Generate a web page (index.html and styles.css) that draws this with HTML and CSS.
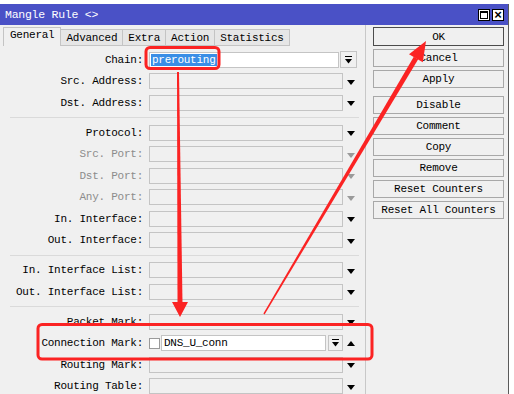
FILE: index.html
```html
<!DOCTYPE html>
<html lang="en">
  <head>
    <meta charset="UTF-8" />
    <meta name="viewport" content="width=device-width, initial-scale=1.0" />
    <title>Mangle Rule</title>
    <link rel="stylesheet" href="styles.css">
  </head>
  <body>
    <div class="screen">
      <div class="window">
        <!-- Title Bar -->
        <div class="titlebar">
          <span class="title">Mangle Rule &lt;&gt;</span>
          <div class="win-btns">
            <span class="win-btn"><span class="max-icon"></span></span>
            <span class="win-btn close">&times;</span>
          </div>
        </div>

        <div class="body">
          <!-- Form with tabs -->
          <div class="form-pane">
            <div class="tabs">
              <span class="tab active">General</span>
              <span class="tab">Advanced</span>
              <span class="tab">Extra</span>
              <span class="tab">Action</span>
              <span class="tab">Statistics</span>
            </div>

            <div class="rows">
              <div class="row">
                <span class="label">Chain:</span>
                <div class="box white chain"><span class="selected">prerouting</span></div>
                <span class="combo-btn">
                  <svg width="7" height="8" viewBox="0 0 7 8"><rect x="0" y="0" width="7" height="1" fill="#000"/><polygon points="0,3 7,3 3.5,7.5" fill="#000"/></svg>
                </span>
              </div>
              <div class="row">
                <span class="label">Src. Address:</span>
                <div class="box"></div>
                <span class="arrow"><span class="down"></span></span>
              </div>
              <div class="row">
                <span class="label">Dst. Address:</span>
                <div class="box"></div>
                <span class="arrow"><span class="down"></span></span>
              </div>

              <div class="sep"></div>

              <div class="row">
                <span class="label">Protocol:</span>
                <div class="box"></div>
                <span class="arrow"><span class="down"></span></span>
              </div>
              <div class="row disabled">
                <span class="label">Src. Port:</span>
                <div class="box"></div>
                <span class="arrow"><span class="down"></span></span>
              </div>
              <div class="row disabled">
                <span class="label">Dst. Port:</span>
                <div class="box"></div>
                <span class="arrow"><span class="down"></span></span>
              </div>
              <div class="row disabled">
                <span class="label">Any. Port:</span>
                <div class="box"></div>
                <span class="arrow"><span class="down"></span></span>
              </div>
              <div class="row">
                <span class="label">In. Interface:</span>
                <div class="box"></div>
                <span class="arrow"><span class="down"></span></span>
              </div>
              <div class="row">
                <span class="label">Out. Interface:</span>
                <div class="box"></div>
                <span class="arrow"><span class="down"></span></span>
              </div>

              <div class="sep"></div>

              <div class="row">
                <span class="label">In. Interface List:</span>
                <div class="box"></div>
                <span class="arrow"><span class="down"></span></span>
              </div>
              <div class="row">
                <span class="label">Out. Interface List:</span>
                <div class="box"></div>
                <span class="arrow"><span class="down"></span></span>
              </div>

              <div class="sep"></div>

              <div class="row">
                <span class="label">Packet Mark:</span>
                <div class="box"></div>
                <span class="arrow"><span class="down"></span></span>
              </div>
              <div class="row">
                <span class="label">Connection Mark:</span>
                <span class="check"></span>
                <div class="box white conn">DNS_U_conn</div>
                <span class="combo-btn small">
                  <svg width="7" height="8" viewBox="0 0 7 8"><rect x="0" y="0" width="7" height="1" fill="#000"/><polygon points="0,3 7,3 3.5,7.5" fill="#000"/></svg>
                </span>
                <span class="arrow"><span class="up"></span></span>
              </div>
              <div class="row">
                <span class="label">Routing Mark:</span>
                <div class="box"></div>
                <span class="arrow"><span class="down"></span></span>
              </div>
              <div class="row">
                <span class="label">Routing Table:</span>
                <div class="box"></div>
                <span class="arrow"><span class="down"></span></span>
              </div>
            </div>
          </div>

          <!-- Buttons -->
          <div class="button-pane">
            <button class="default">OK</button>
            <button>Cancel</button>
            <button class="group-end">Apply</button>
            <button>Disable</button>
            <button>Comment</button>
            <button>Copy</button>
            <button>Remove</button>
            <button>Reset Counters</button>
            <button>Reset All Counters</button>
          </div>
        </div>
      </div>

      <!-- Red annotations -->
      <svg class="marks" width="514" height="394" viewBox="0 0 514 394">
        <rect x="146" y="47.5" width="73" height="21" rx="4" fill="none" stroke="#fb2323" stroke-width="3"/>
        <polygon points="177,72 179,72 182.5,303 177.5,303" fill="#fb2323"/>
        <polygon points="172,302 188,302 180,317" fill="#fb2323"/>
        <rect x="38" y="324.5" width="334" height="34.5" rx="4" fill="none" stroke="#fb2323" stroke-width="3"/>
        <polygon points="263.4,313.6 264.6,314.4 418.2,59.3 413.8,56.7" fill="#fb2323"/>
        <polygon points="426,41 422.8,62.3 409,54.2" fill="#fb2323"/>
      </svg>
    </div>
  </body>
</html>
```

FILE: styles.css
```css
/* General Styling */
* {
  box-sizing: border-box;
  margin: 0;
  padding: 0;
}

body {
  background-color: #fff;
  font-family: "Liberation Mono", "DejaVu Sans Mono", monospace;
  font-size: 11px;
  letter-spacing: -0.25px;
  color: #000;
}

.screen {
  position: relative;
  width: 514px;
  height: 394px;
  overflow: hidden;
  background: #fff;
  padding-top: 4px;
}

.window {
  width: 509px;
  height: 390px;
  background: #f0f0f0;
  border-right: 1px solid #5a5a5a;
}

/* Title Bar */
.titlebar {
  height: 21px;
  background: #4a51c6;
  display: flex;
  align-items: center;
  justify-content: space-between;
  padding: 0 3px 0 5px;
}

.title {
  color: #fff;
  font-size: 11.5px;
}

.win-btns {
  display: flex;
  gap: 2px;
  padding-right: 1px;
}

.win-btn {
  width: 12px;
  height: 12px;
  background: #fff;
  border: 1px solid #000;
  display: flex;
  align-items: center;
  justify-content: center;
  font-family: "Liberation Sans", Arial, sans-serif;
  font-size: 13px;
  line-height: 1;
  letter-spacing: 0;
}

.max-icon {
  width: 8px;
  height: 8px;
  border: 1px solid #000;
  border-top-width: 2px;
}

.close {
  font-weight: bold;
}

/* Layout */
.body {
  display: flex;
  height: 369px;
}

.form-pane {
  width: 366px;
  border-right: 1px solid #c8c8c8;
}

/* Tabs */
.tabs {
  display: flex;
  align-items: flex-end;
  height: 21px;
  padding: 2px 0 0 3px;
}

.tab {
  height: 17px;
  padding: 0 5px;
  line-height: 16px;
  background: #e6e6e6;
  border: 1px solid #c4c4c4;
  border-left: none;
}

.tab.active {
  height: 19px;
  padding: 0 6px;
  line-height: 15px;
  background: #f0f0f0;
  border-left: 1px solid #c4c4c4;
  border-bottom: none;
}

/* Form rows */
.rows {
  padding-top: 3px;
}

.row {
  display: flex;
  align-items: center;
  height: 21.5px;
}

.label {
  width: 143px;
  margin-right: 6px;
  text-align: right;
  white-space: nowrap;
}

.row.disabled .label {
  color: #8c8c8c;
}

.box {
  width: 194px;
  height: 16px;
  border: 1px solid #c4c4c4;
  background: #f0f0f0;
  line-height: 14px;
  padding-left: 1px;
  white-space: nowrap;
}

.box.white {
  background: #fff;
}

.box.chain {
  width: 190px;
}

.selected {
  background: #3a8ee6;
  color: #fff;
  padding: 0 1px;
}

.box.conn {
  width: 165px;
  padding-left: 2px;
}

.check {
  width: 11px;
  height: 11px;
  border: 1px solid #9a9a9a;
  background: #fff;
  margin-right: 1px;
}

.combo-btn {
  width: 17px;
  height: 17px;
  margin-left: 1px;
  border: 1px solid #c4c4c4;
  background: #f0f0f0;
  display: flex;
  align-items: center;
  justify-content: center;
}

.combo-btn.small {
  width: 15px;
  height: 16px;
  margin-left: 2px;
}

.arrow {
  width: 16px;
  display: flex;
  justify-content: center;
}

.down {
  width: 0;
  height: 0;
  border-left: 4px solid transparent;
  border-right: 4px solid transparent;
  border-top: 5px solid #000;
  margin-top: 2px;
}

.up {
  width: 0;
  height: 0;
  border-left: 4px solid transparent;
  border-right: 4px solid transparent;
  border-bottom: 5px solid #000;
}

.row.disabled .down {
  border-top-color: #9a9a9a;
}

.sep {
  height: 8.5px;
  margin: 0 6px 0 10px;
  display: flex;
  align-items: center;
}

.sep::after {
  content: "";
  flex: 1;
  border-top: 1px solid #dadada;
}

/* Buttons */
.button-pane {
  display: flex;
  flex-direction: column;
  gap: 3px;
  padding: 2px 0 0 7px;
}

button {
  width: 131px;
  height: 18px;
  background: #f0f0f0;
  border: 1px solid #a8a8a8;
  font-family: inherit;
  font-size: 11px;
  letter-spacing: -0.25px;
  color: #000;
}

button.default {
  height: 19px;
  border-color: #4c4c4c;
}

button.group-end {
  margin-bottom: 5px;
}

/* Annotations */
.marks {
  position: absolute;
  top: 0;
  left: 0;
  pointer-events: none;
}
```
